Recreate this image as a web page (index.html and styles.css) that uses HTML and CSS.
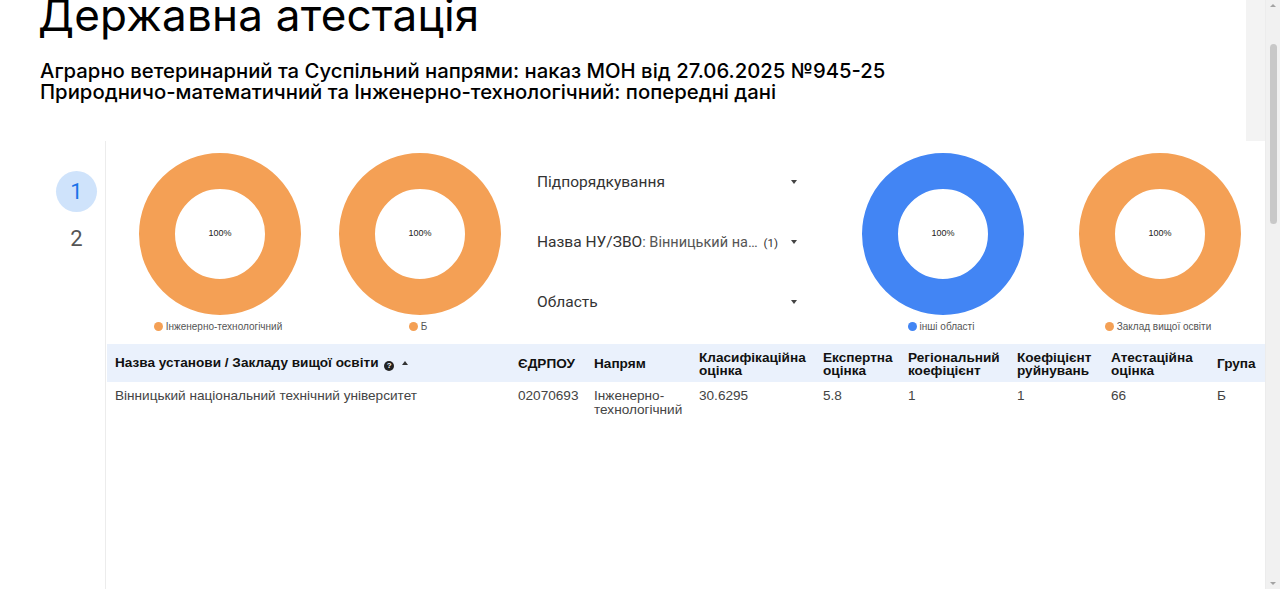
FILE: index.html
```html
<!DOCTYPE html>
<html lang="uk">
<head>
    <meta charset="UTF-8">
    <meta name="viewport" content="width=device-width, initial-scale=1.0">
    <title>Державна атестація</title>
    <link rel="stylesheet" href="styles.css">
</head>
<body>
    <div class="page">
        <div class="main">
            <div class="top">
                <header class="header">
                    <h1>Державна атестація</h1>
                    <p class="sub">Аграрно ветеринарний та Суспільний напрями: наказ МОН від 27.06.2025 №945-25<br>Природничо-математичний та Інженерно-технологічний: попередні дані</p>
                </header>
                <div class="gutter"></div>
            </div>
            <div class="body">
                <nav class="pages">
                    <div class="page-num active">1</div>
                    <div class="page-num">2</div>
                </nav>
                <section class="report">
                    <div class="charts">
                        <div class="chart">
                            <div class="donut">
                                <svg viewBox="0 0 162 162" width="162" height="162"><circle cx="81" cy="81" r="63" fill="none" stroke="#f4a055" stroke-width="36"/></svg>
                                <span class="pct">100%</span>
                            </div>
                            <div class="legend"><span class="dot orange"></span>Інженерно-технологічний</div>
                        </div>
                        <div class="chart">
                            <div class="donut">
                                <svg viewBox="0 0 162 162" width="162" height="162"><circle cx="81" cy="81" r="63" fill="none" stroke="#f4a055" stroke-width="36"/></svg>
                                <span class="pct">100%</span>
                            </div>
                            <div class="legend"><span class="dot orange"></span>Б</div>
                        </div>
                        <div class="filters">
                            <div class="filter"><span class="f-label">Підпорядкування</span><span class="caret"></span></div>
                            <div class="filter"><span class="f-label">Назва НУ/ЗВО<span class="f-value">: Вінницький на…</span><span class="f-count">(1)</span></span><span class="caret"></span></div>
                            <div class="filter"><span class="f-label">Область</span><span class="caret"></span></div>
                        </div>
                        <div class="chart">
                            <div class="donut">
                                <svg viewBox="0 0 162 162" width="162" height="162"><circle cx="81" cy="81" r="63" fill="none" stroke="#4285f4" stroke-width="36"/></svg>
                                <span class="pct">100%</span>
                            </div>
                            <div class="legend"><span class="dot blue"></span>інші області</div>
                        </div>
                        <div class="chart last">
                            <div class="donut">
                                <svg viewBox="0 0 162 162" width="162" height="162"><circle cx="81" cy="81" r="63" fill="none" stroke="#f4a055" stroke-width="36"/></svg>
                                <span class="pct">100%</span>
                            </div>
                            <div class="legend"><span class="dot orange"></span>Заклад вищої освіти</div>
                        </div>
                    </div>
                    <table class="grid">
                        <colgroup>
                            <col style="width:403px">
                            <col style="width:76px">
                            <col style="width:105px">
                            <col style="width:124px">
                            <col style="width:85px">
                            <col style="width:109px">
                            <col style="width:94px">
                            <col style="width:106px">
                            <col style="width:56px">
                        </colgroup>
                        <thead>
                            <tr>
                                <th>Назва установи / Закладу вищої освіти <span class="help">?</span><span class="sort"></span></th>
                                <th>ЄДРПОУ</th>
                                <th>Напрям</th>
                                <th>Класифікаційна оцінка</th>
                                <th>Експертна оцінка</th>
                                <th>Регіональний коефіцієнт</th>
                                <th>Коефіцієнт руйнувань</th>
                                <th>Атестаційна оцінка</th>
                                <th>Група</th>
                            </tr>
                        </thead>
                        <tbody>
                            <tr>
                                <td>Вінницький національний технічний університет</td>
                                <td>02070693</td>
                                <td>Інженерно-технологічний</td>
                                <td>30.6295</td>
                                <td>5.8</td>
                                <td>1</td>
                                <td>1</td>
                                <td>66</td>
                                <td>Б</td>
                            </tr>
                        </tbody>
                    </table>
                </section>
            </div>
        </div>
        <div class="scrollbar">
            <span class="arrow up"></span>
            <span class="thumb"></span>
            <span class="arrow down"></span>
        </div>
    </div>
</body>
</html>
```

FILE: styles.css
```css
html, body {
    margin: 0;
    height: 100%;
    overflow: hidden;
}
body {
    font-family: Roboto, "Liberation Sans", Arial, sans-serif;
    color: #333;
    background: white;
}
.page {
    display: flex;
    height: 589px;
}
.main {
    flex: 1;
    display: flex;
    flex-direction: column;
}
.top {
    display: flex;
    height: 141px;
}
.header {
    flex: 1;
    padding-left: 40px;
}
.gutter {
    width: 19px;
    background: #f3f3f3;
}
h1 {
    font-family: Inter, sans-serif;
    font-weight: 400;
    font-size: 44px;
    line-height: 48px;
    margin: -9px 0 0 -2px;
    color: #000;
    letter-spacing: 0.2px;
}
.sub {
    font-family: Inter, sans-serif;
    font-weight: 500;
    font-size: 20.3px;
    line-height: 21px;
    margin: 21px 0 0 0;
    color: #000;
}
.body {
    flex: 1;
    display: flex;
}
.pages {
    width: 106px;
    border-right: 1px solid #ececec;
    display: flex;
    flex-direction: column;
    align-items: flex-start;
    padding-top: 30px;
    gap: 6px;
    box-sizing: border-box;
}
.page-num {
    width: 41px;
    height: 41px;
    margin-left: 56px;
    border-radius: 50%;
    display: flex;
    align-items: center;
    justify-content: center;
    font-size: 22px;
    color: #555;
}
.page-num.active {
    background: #cfe3fb;
    color: #1a73e8;
}
.report {
    flex: 1;
    padding-top: 11px;
}
.charts {
    display: grid;
    grid-template-columns: 200px 200px 323px 200px 1fr;
    padding-left: 14px;
    height: 192px;
}
.chart {
    display: flex;
    flex-direction: column;
    align-items: center;
    padding-top: 1px;
}
.chart.last {
    padding-left: 12px;
}
.donut {
    position: relative;
    width: 162px;
    height: 162px;
}
.donut svg {
    display: block;
}
.pct {
    position: absolute;
    left: 0;
    right: 0;
    top: 75px;
    text-align: center;
    font-family: "Liberation Sans", Arial, sans-serif;
    font-size: 9px;
    color: #222;
}
.legend {
    margin-top: 6px;
    display: flex;
    align-items: center;
    font-family: "Liberation Sans", Arial, sans-serif;
    font-size: 10px;
    color: #555;
    margin-right: 4px;
}
.dot {
    width: 9px;
    height: 9px;
    border-radius: 50%;
    margin-right: 3px;
}
.dot.orange {
    background: #f4a055;
}
.dot.blue {
    background: #4285f4;
}
.filters {
    padding-left: 17px;
    padding-top: 8px;
    display: flex;
    flex-direction: column;
    gap: 16px;
}
.filter {
    width: 262px;
    height: 44px;
    display: flex;
    align-items: center;
    justify-content: space-between;
    font-size: 15.5px;
    color: #333;
}
.f-value {
    font-size: 14.5px;
    color: #555;
}
.f-count {
    font-size: 11.5px;
    margin-left: 6px;
    color: #333;
}
.caret {
    width: 0;
    height: 0;
    border-left: 3.5px solid transparent;
    border-right: 3.5px solid transparent;
    border-top: 4px solid #444;
    margin-right: 2px;
}
.grid {
    width: 1158px;
    margin-left: 1px;
    border-collapse: collapse;
    table-layout: fixed;
    font-family: "Liberation Sans", Arial, sans-serif;
    font-size: 13.6px;
}
.grid th {
    background: #eaf1fc;
    color: #111;
    font-weight: 700;
    text-align: left;
    vertical-align: middle;
    padding: 5px 8px 4px 8px;
    height: 29px;
    line-height: 13px;
}
.grid td {
    color: #444;
    vertical-align: top;
    padding: 7px 8px;
    line-height: 14px;
}
.help {
    display: inline-block;
    width: 10px;
    height: 10px;
    border-radius: 50%;
    background: #222;
    color: white;
    font-size: 8px;
    line-height: 10px;
    text-align: center;
    margin-left: 2px;
    vertical-align: -1px;
}
.sort {
    display: inline-block;
    width: 0;
    height: 0;
    border-left: 3px solid transparent;
    border-right: 3px solid transparent;
    border-bottom: 4px solid #333;
    margin-left: 8px;
    vertical-align: 2px;
}
.scrollbar {
    width: 14px;
    background: #f1f1f1;
    display: flex;
    flex-direction: column;
    align-items: center;
    border-left: 1px solid #ececec;
}
.arrow {
    width: 0;
    height: 0;
    border-left: 3px solid transparent;
    border-right: 3px solid transparent;
}
.arrow.up {
    border-bottom: 3px solid #a3a3a3;
    margin-top: 4px;
}
.arrow.down {
    border-top: 3px solid #a3a3a3;
    margin-top: auto;
    margin-bottom: 4px;
}
.thumb {
    width: 7px;
    height: 180px;
    margin-top: 37px;
    border-radius: 4px;
    background: #c8c8c8;
}
```
